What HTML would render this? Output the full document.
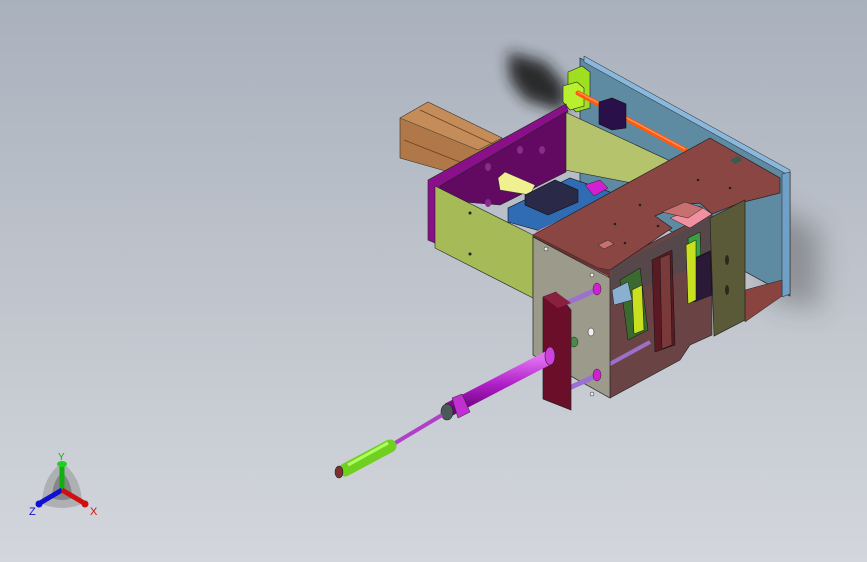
<!DOCTYPE html>
<html><head><style>
html,body{margin:0;padding:0}
body{width:867px;height:562px;overflow:hidden;background:linear-gradient(180deg,#a9b1bd 0%,#bfc4cc 50%,#d3d6dc 100%);position:relative;font-family:"Liberation Sans",sans-serif}
</style></head><body>
<svg width="867" height="562" viewBox="0 0 867 562" style="position:absolute;left:0;top:0">
<defs>
<filter id="b" x="-50%" y="-50%" width="200%" height="200%"><feGaussianBlur stdDeviation="7"/></filter>
<filter id="b2" x="-50%" y="-50%" width="200%" height="200%"><feGaussianBlur stdDeviation="14"/></filter>
<linearGradient id="mag" x1="0" y1="0" x2="0" y2="1"><stop offset="0" stop-color="#e070f0"/><stop offset="0.5" stop-color="#b020c8"/><stop offset="1" stop-color="#700080"/></linearGradient>
</defs>
<!-- shadows -->
<path d="M508 52 L545 62 L565 85 L565 112 L525 100 L510 80 Z" fill="#1a1a1a" filter="url(#b)" opacity="0.9"/>
<path d="M760 200 L820 230 L820 310 L770 300 Z" fill="#333" filter="url(#b2)" opacity="0.35"/>
<!-- back blue plate -->
<polygon points="580,58 790,172 790,296 580,182" fill="#5e8aa2" stroke="#222" stroke-width="0.7"/>
<polygon points="584,56 790,170 790,176 584,62" fill="#8ab8dc" stroke="#222" stroke-width="0.5"/>
<polygon points="782,174 790,172 790,294 782,297" fill="#6fa0c8" stroke="#222" stroke-width="0.5"/>
<!-- lime brackets -->
<polygon points="568,72 582,66 590,72 590,108 576,112 568,104" fill="#9ee020" stroke="#222" stroke-width="0.6"/>
<polygon points="563,86 577,82 584,88 584,106 570,110 563,102" fill="#b8f030" stroke="#222" stroke-width="0.6"/>
<!-- orange rod -->
<line x1="578" y1="93" x2="685" y2="150" stroke="#ff5a10" stroke-width="5" stroke-linecap="round"/>
<line x1="578" y1="92" x2="685" y2="149" stroke="#ff9a60" stroke-width="1.2"/>
<!-- dark purple block -->
<polygon points="599,102 612,98 626,104 626,128 612,130 599,124" fill="#2a1048" stroke="#111" stroke-width="0.6"/>
<!-- brown cylinder -->
<polygon points="400,118 428,102 502,138 502,172 470,178 400,158" fill="#b07848" stroke="#333" stroke-width="0.6"/>
<polygon points="400,118 428,102 502,138 478,150" fill="#c48c58" stroke="#333" stroke-width="0.5"/>
<line x1="404" y1="140" x2="480" y2="170" stroke="#6a4020" stroke-width="0.8"/>
<line x1="420" y1="110" x2="495" y2="145" stroke="#6a4020" stroke-width="0.8"/>
<!-- inner lime back wall -->
<polygon points="565,112 668,160 668,190 565,170" fill="#b5c46c" stroke="#222" stroke-width="0.6"/>
<!-- purple plate -->
<polygon points="428,180 566,104 568,112 440,186 440,245 428,240" fill="#8a108a" stroke="#222" stroke-width="0.6"/>
<polygon points="440,186 566,112 566,172 500,205 440,200" fill="#620a62" stroke="#222" stroke-width="0.6"/>
<ellipse cx="488" cy="167" rx="3" ry="4" fill="#8a2a8a"/><ellipse cx="520" cy="150" rx="3" ry="4" fill="#8a2a8a"/><ellipse cx="542" cy="150" rx="3" ry="4" fill="#8a2a8a"/><ellipse cx="488" cy="203" rx="3" ry="4" fill="#8a2a8a"/>
<!-- yellow rod -->
<polygon points="498,178 505,172 535,185 530,195 500,190" fill="#f0f090" stroke="#333" stroke-width="0.5"/>
<!-- blue block -->
<polygon points="508,208 570,178 610,192 610,215 555,235 508,222" fill="#2f6cb4" stroke="#111" stroke-width="0.6"/>
<polygon points="525,195 555,180 578,190 578,202 548,215 525,205" fill="#2a2a48" stroke="#111" stroke-width="0.6"/>
<polygon points="585,185 600,180 608,188 594,196" fill="#d020d0" stroke="#222" stroke-width="0.5"/>
<!-- lime side -->
<polygon points="435,186 533,235 533,298 435,248" fill="#a6bb58" stroke="#222" stroke-width="0.6"/>
<circle cx="470" cy="213" r="1.5" fill="#222"/><circle cx="470" cy="254" r="1.5" fill="#222"/>
<polygon points="535,232 560,220 565,223 540,236" fill="#f08090"/>
<!-- interior mechanism -->
<polygon points="608,265 712,212 712,335 690,345 680,360 610,398" fill="#6a4444" stroke="#222" stroke-width="0.6"/>
<polygon points="612,268 712,216 712,260 612,300" fill="#4a4a50" opacity="0.6"/>
<polygon points="620,280 640,268 648,330 628,340" fill="#3a6a30" stroke="#111" stroke-width="0.5"/>
<polygon points="632,290 642,285 644,330 634,334" fill="#c8e020" stroke="#111" stroke-width="0.5"/>
<polygon points="652,260 672,250 675,345 655,352" fill="#5a1a24" stroke="#111" stroke-width="0.5"/>
<polygon points="660,258 670,254 672,345 662,349" fill="#7a3a3a" stroke="#111" stroke-width="0.5"/>
<polygon points="688,238 700,232 702,290 690,296" fill="#3aa040" stroke="#111" stroke-width="0.5"/>
<polygon points="690,260 712,250 712,290 690,300" fill="#2a1a38" stroke="#111" stroke-width="0.5"/>
<polygon points="670,218 700,206 712,214 690,228" fill="#f090a0" stroke="#222" stroke-width="0.5"/>
<polygon points="612,290 628,282 632,300 614,305" fill="#8ab0d0" stroke="#222" stroke-width="0.5"/>
<polygon points="745,290 782,280 782,296 745,322" fill="#8a4440" stroke="#222" stroke-width="0.5"/>
<line x1="608" y1="365" x2="650" y2="342" stroke="#9a70c8" stroke-width="4"/>
<!-- top brown plate -->
<polygon points="533,235 710,138 780,178 780,193 740,203 712,214 700,203 680,205 655,216 672,228 610,270 598,268" fill="#8a4642" stroke="#222" stroke-width="0.7"/>
<polygon points="662,212 685,202 703,208 688,218" fill="#c87070" stroke="#222" stroke-width="0.5"/>
<polygon points="598,245 608,240 614,244 604,249" fill="#c87070" stroke="#222" stroke-width="0.5"/>
<polygon points="730,160 738,156 743,160 735,164" fill="#3a5a50"/>
<circle cx="698" cy="180" r="1.3" fill="#222"/><circle cx="730" cy="188" r="1.3" fill="#222"/><circle cx="640" cy="205" r="1.3" fill="#222"/><circle cx="625" cy="243" r="1.3" fill="#222"/><circle cx="658" cy="226" r="1.3" fill="#222"/><circle cx="615" cy="224" r="1.3" fill="#222"/>
<polygon points="533,235 598,268 610,270 610,277 533,238" fill="#6a3230"/>
<!-- gray front plate -->
<polygon points="533,237 610,278 610,398 533,355" fill="#9c9a8a" stroke="#222" stroke-width="0.7"/>
<circle cx="546" cy="249" r="2" fill="#eee" stroke="#222" stroke-width="0.5"/>
<circle cx="592" cy="275" r="2" fill="#eee" stroke="#222" stroke-width="0.5"/>
<ellipse cx="591" cy="332" rx="3" ry="4" fill="#eee" stroke="#222" stroke-width="0.5"/>
<circle cx="592" cy="394" r="2" fill="#eee" stroke="#222" stroke-width="0.5"/>
<line x1="560" y1="306" x2="596" y2="290" stroke="#9a70d0" stroke-width="5"/>
<line x1="560" y1="392" x2="596" y2="376" stroke="#9a70d0" stroke-width="5"/>
<ellipse cx="597" cy="289" rx="4" ry="6" fill="#d020d0" stroke="#222" stroke-width="0.5"/>
<ellipse cx="597" cy="375" rx="4" ry="6" fill="#d020d0" stroke="#222" stroke-width="0.5"/>
<ellipse cx="574" cy="342" rx="4" ry="5" fill="#4a8a4a" stroke="#222" stroke-width="0.5"/>
<!-- right olive plate -->
<polygon points="710,218 745,200 745,320 714,336" fill="#5a5a38" stroke="#222" stroke-width="0.7"/>
<ellipse cx="727" cy="260" rx="2" ry="5" fill="#2a2a18"/><ellipse cx="727" cy="290" rx="2" ry="5" fill="#2a2a18"/>
<polygon points="692,260 710,252 712,295 694,302" fill="#2a1a38" stroke="#111" stroke-width="0.5"/>
<polygon points="686,245 696,240 696,300 688,304" fill="#c8e020" stroke="#111" stroke-width="0.5"/>
<!-- dark red bar -->
<polygon points="543,297 556,292 571,310 571,410 543,399" fill="#6a0e2a" stroke="#222" stroke-width="0.7"/>
<polygon points="543,297 556,292 571,303 558,308" fill="#8a2040"/>
<!-- magenta cylinder -->
<line x1="548" y1="358" x2="448" y2="410" stroke="url(#mag)" stroke-width="14" stroke-linecap="butt"/>
<polygon points="452,398 462,394 470,412 458,418" fill="#c030d0" stroke="#222" stroke-width="0.5"/>
<ellipse cx="447" cy="412" rx="6" ry="8" fill="#4a5a58" stroke="#222" stroke-width="0.6"/>
<ellipse cx="550" cy="356" rx="5" ry="9" fill="#d040e0" stroke="#222" stroke-width="0.6"/>
<line x1="442" y1="415" x2="380" y2="452" stroke="#b040c8" stroke-width="4"/>
<line x1="390" y1="446" x2="345" y2="470" stroke="#70d020" stroke-width="13" stroke-linecap="round"/>
<line x1="388" y1="443" x2="348" y2="465" stroke="#b0ff60" stroke-width="3"/>
<ellipse cx="339" cy="472" rx="4" ry="6" fill="#7a3030" stroke="#222" stroke-width="0.6"/>
<!-- triad -->
<g transform="translate(62,490)">
<path d="M-20 14 Q-20 -12 0 -28 Q20 -12 20 14 Q0 22 -20 14 Z" fill="#888" opacity="0.45"/>
<path d="M-10 8 Q-10 -8 0 -18 Q10 -8 10 8 Q0 12 -10 8 Z" fill="#555" opacity="0.45"/>
<line x1="0" y1="0" x2="0" y2="-24" stroke="#10b010" stroke-width="5"/>
<ellipse cx="0" cy="-26" rx="5" ry="3" fill="#20d020"/>
<line x1="0" y1="0" x2="-22" y2="13" stroke="#1010d0" stroke-width="5"/>
<circle cx="-23" cy="14" r="3.5" fill="#1010d0"/>
<line x1="0" y1="0" x2="22" y2="13" stroke="#d01010" stroke-width="5"/>
<circle cx="23" cy="14" r="3.5" fill="#d01010"/>
<text x="-4" y="-30" font-size="10" fill="#10b010" font-family="Liberation Sans">Y</text>
<text x="-33" y="25" font-size="11" fill="#1010d0" font-family="Liberation Sans">Z</text>
<text x="28" y="25" font-size="11" fill="#d01010" font-family="Liberation Sans">X</text>
</g>
</svg>
</body></html>
